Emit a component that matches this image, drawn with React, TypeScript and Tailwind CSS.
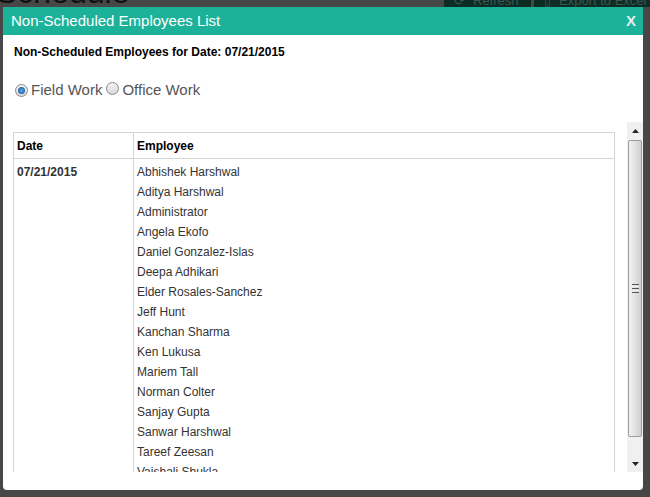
import React from "react";

const names = [
  "Abhishek Harshwal",
  "Aditya Harshwal",
  "Administrator",
  "Angela Ekofo",
  "Daniel Gonzalez-Islas",
  "Deepa Adhikari",
  "Elder Rosales-Sanchez",
  "Jeff Hunt",
  "Kanchan Sharma",
  "Ken Lukusa",
  "Mariem Tall",
  "Norman Colter",
  "Sanjay Gupta",
  "Sanwar Harshwal",
  "Tareef Zeesan",
  "Vaishali Shukla",
  "Vikram Singh",
];

function Radio({ checked }: { checked: boolean }) {
  return (
    <span className="inline-flex w-[13px] h-[13px] rounded-full border border-[#8a8a8a] bg-linear-to-b from-[#f4f4f4] to-[#d8d8d8] items-center justify-center">
      {checked && (
        <span className="w-[7px] h-[7px] rounded-full bg-radial from-[#5aa9e6] to-[#0b4f8c]" />
      )}
    </span>
  );
}

export default function App() {
  return (
    <div
      className="relative w-[650px] h-[497px] bg-[#474747] overflow-hidden"
      style={{ fontFamily: '"Liberation Sans", Arial, sans-serif' }}
    >
      {/* background page, under overlay */}
      <div className="absolute left-[-4px] top-[-24px] text-[32px] text-[#111] leading-none">
        Schedule
      </div>
      <div className="absolute left-[444px] top-[-10px] w-[87px] h-[17px] bg-[#0c2c24] text-[#3d5750] text-[13px] flex items-end pl-[10px] gap-[8px]">
        <span className="leading-none">⟳</span>
        <span className="leading-none">Refresh</span>
      </div>
      <div className="absolute left-[534px] top-[-10px] w-[120px] h-[17px] bg-[#0c2c24] text-[#3d5750] text-[13px] flex items-end pl-[10px] gap-[8px]">
        <span className="leading-none">▯</span>
        <span className="leading-none">Export to Excel</span>
      </div>

      {/* modal */}
      <div className="absolute left-[3px] top-[7px] w-[640px] h-[483px] bg-white rounded-b-[4px] flex flex-col">
        <div className="h-[28px] bg-[#1cb29a] flex items-center justify-between pl-[8px] pr-[7px]">
          <span className="text-white text-[15px]">Non-Scheduled Employees List</span>
          <span className="text-[#e3eeeb] text-[15px] font-bold">X</span>
        </div>
        <div className="pl-[11px] pt-[10px] text-[12px] font-bold text-black leading-[14px]">
          Non-Scheduled Employees for Date: 07/21/2015
        </div>
        <div className="pl-[12px] mt-[22px] flex items-center text-[15px] text-[#555] leading-[18px]">
          <Radio checked />
          <span className="ml-[3px]">Field Work</span>
          <span className="ml-[4px]"><Radio checked={false} /></span>
          <span className="ml-[3px]">Office Work</span>
        </div>
        <div className="mt-[23px] ml-[10px] h-[350px] flex">
          <div className="flex-1 overflow-hidden pt-[10px]">
            <table className="w-[602px] border-collapse text-[12px]">
              <thead>
                <tr className="h-[26px]">
                  <th className="w-[120px] border border-[#d4d4d4] text-left pl-[3px] font-bold text-black">
                    Date
                  </th>
                  <th className="border border-[#d4d4d4] text-left pl-[3px] font-bold text-black">
                    Employee
                  </th>
                </tr>
              </thead>
              <tbody>
                <tr>
                  <td className="border border-[#d4d4d4] align-top pl-[3px] pt-[3px] font-bold text-[#333] leading-[20px]">
                    07/21/2015
                  </td>
                  <td className="border border-[#d4d4d4] align-top pl-[3px] pt-[3px] text-[#333] leading-[20px]">
                    {names.map((n) => (
                      <div key={n}>{n}</div>
                    ))}
                  </td>
                </tr>
              </tbody>
            </table>
          </div>
          {/* scrollbar */}
          <div className="w-[16px] bg-[#f0f0f0] flex flex-col">
            <div className="h-[17px] flex items-center justify-center">
              <svg width="7" height="4" viewBox="0 0 7 4">
                <path d="M0 4 L3.5 0 L7 4 Z" fill="#222" />
              </svg>
            </div>
            <div className="flex-1 relative">
              <div className="absolute left-[1px] right-[1px] top-[1px] h-[297px] border border-[#9e9e9e] rounded-[2px] bg-linear-to-r from-[#f2f2f2] via-[#e2e2e2] to-[#cfcfcf] flex items-center justify-center">
                <div className="flex flex-col gap-[1px]">
                  <div className="w-[7px] h-[1px] bg-[#555]" />
                  <div className="w-[7px] h-[1px] bg-[#eee]" />
                  <div className="w-[7px] h-[1px] bg-[#555]" />
                  <div className="w-[7px] h-[1px] bg-[#eee]" />
                  <div className="w-[7px] h-[1px] bg-[#555]" />
                </div>
              </div>
            </div>
            <div className="h-[17px] flex items-center justify-center">
              <svg width="7" height="4" viewBox="0 0 7 4">
                <path d="M0 0 L7 0 L3.5 4 Z" fill="#222" />
              </svg>
            </div>
          </div>
        </div>
      </div>
    </div>
  );
}
